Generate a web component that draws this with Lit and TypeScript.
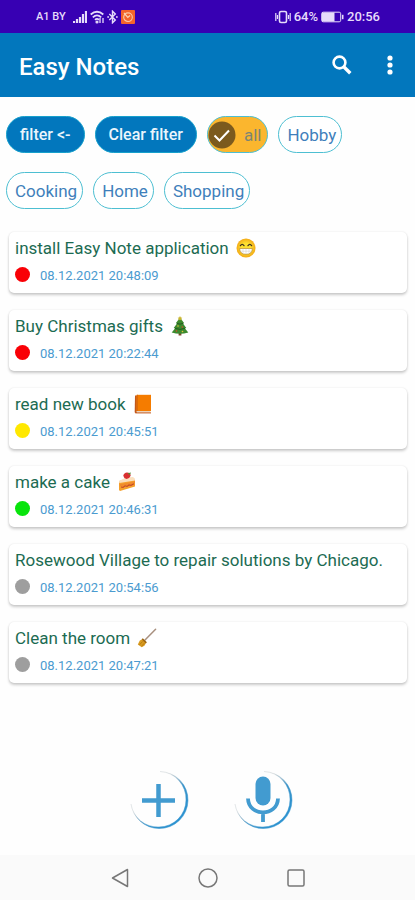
import { LitElement, html, css, svg, nothing, type TemplateResult } from "lit";
import { customElement, property } from "lit/decorators.js";
import { classMap } from "lit/directives/class-map.js";

type Priority = "high" | "medium" | "low" | "none";

interface Note {
  title: string;
  emoji?: string;
  priority: Priority;
  date: string;
}

const NOTES: Note[] = [
  { title: "install Easy Note application", emoji: "grin", priority: "high", date: "08.12.2021 20:48:09" },
  { title: "Buy Christmas gifts", emoji: "tree", priority: "high", date: "08.12.2021 20:22:44" },
  { title: "read new book", emoji: "book", priority: "medium", date: "08.12.2021 20:45:51" },
  { title: "make a cake", emoji: "cake", priority: "low", date: "08.12.2021 20:46:31" },
  { title: "Rosewood Village to repair solutions by Chicago.", priority: "none", date: "08.12.2021 20:54:56" },
  { title: "Clean the room", emoji: "broom", priority: "none", date: "08.12.2021 20:47:21" },
];

const EMOJI: Record<string, TemplateResult> = {
  grin: svg`
    <defs><radialGradient id="face"><stop offset="0.5" stop-color="#fde030"/><stop offset="1" stop-color="#f3a916"/></radialGradient></defs>
    <circle cx="10" cy="10" r="9.5" fill="url(#face)"/>
    <path d="M4.4 7.6Q6.2 5 8 7.6M12 7.6Q13.800 5 15.600 7.6" fill="none" stroke="#3f3420" stroke-width="1.300" stroke-linecap="round"/>
    <path d="M3.600 10.500H16.400Q16.200 16.300 10 16.300T3.600 10.500Z" fill="#fff" stroke="#b98a2a" stroke-width=".7"/>
    <path d="M4.300 13.200H15.700M7 10.700V15.600M10 10.700V16M13 10.700V15.600" stroke="#cfc9c0" stroke-width=".5"/>`,
  tree: svg`
    <path d="M8.600 16H11.400V19.500H8.600Z" fill="#7b4a2b"/>
    <path d="M10 1.500L14 7L12.800 7.200L16.300 12L14.800 12.300L18.300 16.600Q10 19 1.700 16.600L5.200 12.300L3.700 12L7.200 7.200L6 7Z" fill="#3c8a2e"/>
    <path d="M6.500 7.300Q10 9 13.500 7.300M4.800 12.300Q10 14.500 15.200 12.300" fill="none" stroke="#245c1e" stroke-width="1"/>
    <path d="M10 0L10.800 1.600L12.300 1.800L11.200 3L11.500 4.500L10 3.700L8.500 4.500L8.800 3L7.700 1.800L9.200 1.600Z" fill="#c9b52d"/>
    <circle cx="8" cy="10" r=".8" fill="#e3c23a"/><circle cx="12.300" cy="11" r=".8" fill="#d9472b"/><circle cx="6.500" cy="15" r=".8" fill="#d9472b"/><circle cx="12.500" cy="15.500" r=".8" fill="#e3c23a"/>`,
  book: svg`
    <path d="M2 1.500H4V19H2.500Q1.700 19 1.700 18Z" fill="#c2571a"/>
    <path d="M3.500 .8H18V17H3.500Z" fill="#f57c00"/>
    <path d="M3.500 17H17.500V18.600H3.500Z" fill="#e9d3bd"/>
    <path d="M2.300 18.400H18V19.400H2.300Z" fill="#c2571a"/>
    <path d="M4.500 .8V17" stroke="#dc6a08" stroke-width="1"/>`,
  cake: svg`
    <path d="M2 9L14 6.500Q17.500 6.500 18 8L18 14.500L3 19L2 18Z" fill="#f5a02c"/>
    <path d="M2 9L9 5.500L16 5L18 6.800V8.400L2.300 11Z" fill="#fbe0c0"/>
    <path d="M2.600 12.300L18 9.200V11.200L2.800 14.600Z" fill="#f08a2b"/>
    <path d="M4 15L6 15.400L8 13.800L10 14.400L12 12.900L14 13.300L17 11.700" fill="none" stroke="#c6482a" stroke-width="1.200"/>
    <path d="M6.300 3.800Q7 .8 10 .6Q13.500 .8 13.600 3.600Q12.500 6.800 9.500 6.900Q6.700 6.400 6.300 3.800Z" fill="#d93030"/>
    <path d="M10.500 1.200L14 .6L13 3Z" fill="#568f36"/>`,
  broom: svg`
    <path d="M8 12L18.600 1.300" stroke="#a8907f" stroke-width="1.500" stroke-linecap="round"/>
    <path d="M5.800 11L9.200 14.400L7.600 17.400L4.800 19.200L.8 16.600L2.800 12.600Z" fill="#d99a1e"/>
    <path d="M5.800 10.200L9.900 14.200L8.800 15.400L4.700 11.300Z" fill="#9a6412"/>
    <path d="M2.500 16.800L5.500 13.500M4.700 18.200L7.300 15.200" stroke="#a87412" stroke-width=".7"/>`,
};

const EMOJI_LABEL: Record<string, string> = {
  grin: "beaming face",
  tree: "Christmas tree",
  book: "orange book",
  cake: "shortcake",
  broom: "broom",
};

@customElement("status-bar")
class StatusBar extends LitElement {
  static styles = css`
    :host {
      display: flex;
      justify-content: space-between;
      align-items: center;
      height: 33px;
      padding: 0 35px 0 36px;
      background: #3700b3;
      color: #e6dcfa;
      font: 500 13px/16px Roboto, sans-serif;
    }
    .side { display: flex; align-items: center; gap: 3px; }
    .carrier { margin-right: 4px; font-size: 11px; }
    svg { display: block; fill: none; stroke: currentColor; }
  `;

  render() {
    return html`
      <div class="side">
        <span class="carrier">A1 BY</span>
        <svg width="14" height="14" viewBox="0 0 14 14" stroke-width="2.200">
          <path d="M1 13V11M4 13V9M7 13V7M10 13V4M13 13V1" />
        </svg>
        <svg width="14" height="14" viewBox="0 0 14 14" stroke-width="1.800">
          <path d="M.7 4.500Q7-1 13.300 4.500M2.800 7.300Q7 3.500 11.200 7.300M5 9.800Q7 8 9 9.800" />
          <path d="M10 8V13M13 8V13" stroke-width="1.300" /><circle cx="7" cy="12" r=".7" />
        </svg>
        <svg width="11" height="14" viewBox="0 0 11 14" stroke-width="1.400">
          <path d="M2.300 4L8.300 10L5.500 12.800V1.200L8.300 4L2.300 10" />
          <path d="M.3 7H2M9 7H10.700" stroke-width="1.600" />
        </svg>
        <svg width="14" height="14" viewBox="0 0 14 14">
          <rect width="14" height="14" rx="1" fill="#f4642a" stroke="none" />
          <circle cx="7" cy="7.200" r="4.300" stroke="#fbc9a8" stroke-width="1.100" />
          <path d="M3 3L6.800 7.500L9 5.500" stroke="#fbd3b4" stroke-width="1.200" />
        </svg>
      </div>
      <div class="side">
        <svg width="16" height="14" viewBox="0 0 16 14" stroke-width="1.600">
          <rect x="4.500" y="1.500" width="7" height="11" rx="1.500" />
          <path d="M.8 3V11M2.500 5V9M13.500 5V9M15.200 3V11" stroke-width="1.200" />
        </svg>
        <span>64%</span>
        <svg width="23" height="12" viewBox="0 0 23 12">
          <rect x=".7" y="1.200" width="19" height="9.600" rx="1.500" />
          <rect x="1" y="1.500" width="12.500" height="9" fill="currentColor" stroke="none" />
          <path d="M21.700 3.800V8.200" stroke-width="1.600" />
        </svg>
        <span>20:56</span>
      </div>
    `;
  }
}

@customElement("app-header")
class AppHeader extends LitElement {
  static styles = css`
    :host {
      display: flex;
      align-items: center;
      height: 64px;
      padding: 0 5px 0 19px;
      background: #0277bd;
      color: #fff;
    }
    h1 { flex: 1; margin: 0; padding-top: 4px; font: 500 24px/32px Roboto, sans-serif; }
    button {
      display: grid;
      place-items: center;
      height: 48px;
      width: 40px;
      padding: 0;
      border: 0;
      background: none;
      color: inherit;
    }
    .search { width: 56px; }
    svg { display: block; }
  `;

  render() {
    return html`
      <h1>Easy Notes</h1>
      <button class="search" aria-label="Search">
        <svg width="20" height="20" viewBox="0 0 20 20" fill="none" stroke="#fff">
          <circle cx="7.500" cy="7.500" r="5.900" stroke-width="2.600" />
          <path d="M12 12L18.300 18.300" stroke-width="3.400" />
        </svg>
      </button>
      <button aria-label="More options">
        <svg width="6" height="20" viewBox="0 0 6 20" fill="#fff">
          <circle cx="3" cy="3" r="2.600" /><circle cx="3" cy="10" r="2.600" /><circle cx="3" cy="17" r="2.600" />
        </svg>
      </button>
    `;
  }
}

@customElement("filter-chips")
class FilterChips extends LitElement {
  static styles = css`
    :host {
      display: flex;
      flex-wrap: wrap;
      gap: 19px 10px;
      padding: 19px 6px 0;
    }
    button {
      display: flex;
      align-items: center;
      height: 37px;
      padding: 0 5px 0 8px;
      border: 1px solid #4dbfd2;
      border-radius: 19px;
      background: #fff;
      color: #3f7fbb;
      font: 400 17px/20px Roboto, sans-serif;
    }
    .action {
      padding: 0 13px;
      border-color: #16a0cc;
      background: #0277bd;
      color: #eaf5fc;
      font-size: 16px;
      font-weight: 500;
    }
    .checked {
      gap: 8px;
      padding: 0 6px 0 0;
      background: #fbb62e;
      color: #7c8573;
    }
    .check { display: block; }
  `;

  private chip(label: string, kind = "") {
    return html`<button class=${classMap({ action: kind === "action", checked: kind === "checked" })}>
      ${kind === "checked"
        ? html`<svg class="check" width="28" height="28" viewBox="0 0 28 28" aria-hidden="true">
            <circle cx="14" cy="14" r="13.500" fill="#7b5a1e" />
            <path d="M6.500 14.500L11.500 19.500L21 9.500" fill="none" stroke="#fff" stroke-width="2" />
          </svg>`
        : nothing}<span>${label}</span>
    </button>`;
  }

  render() {
    return html`
      ${this.chip("filter <-", "action")} ${this.chip("Clear filter", "action")}
      ${this.chip("all", "checked")} ${["Hobby", "Cooking", "Home", "Shopping"].map((c) => this.chip(c))}
    `;
  }
}

@customElement("note-card")
class NoteCard extends LitElement {
  static styles = css`
    :host {
      display: block;
      box-sizing: border-box;
      height: 61px;
      padding: 4px 6px;
      border-radius: 5px;
      background: #fff;
      box-shadow: 0 2px 3px rgba(0, 0, 0, 0.2), 0 0 2px rgba(0, 0, 0, 0.1);
      font-family: Roboto, sans-serif;
    }
    h2 {
      display: flex;
      align-items: center;
      gap: 7px;
      margin: 0;
      color: #1c6b52;
      font-size: 17px;
      font-weight: 400;
      line-height: 24px;
      white-space: nowrap;
    }
    p {
      display: flex;
      align-items: flex-start;
      gap: 10px;
      margin: 7px 0 0;
      color: #4b9bd0;
      font-size: 13px;
      line-height: 18px;
    }
    .dot { width: 15px; height: 15px; border-radius: 50%; }
    .high { background: #f90006; }
    .medium { background: #ffe800; }
    .low { background: #08e40c; }
    .none { background: #9e9e9e; }
  `;

  @property({ attribute: false }) note!: Note;

  render() {
    const { title, emoji, priority, date } = this.note;
    return html`
      <h2>
        <span>${title}</span>
        ${emoji
          ? html`<svg width="20" height="20" viewBox="0 0 20 20" role="img" aria-label=${EMOJI_LABEL[emoji]}>${EMOJI[emoji]}</svg>`
          : nothing}
      </h2>
      <p><span class="dot ${priority}"></span><time>${date}</time></p>
    `;
  }
}

@customElement("app-root")
class AppRoot extends LitElement {
  static styles = css`
    :host {
      display: flex;
      flex-direction: column;
      min-height: 100vh;
      background: #fefefe;
    }
    .notes {
      display: flex;
      flex-direction: column;
      gap: 17px;
      margin: 0;
      padding: 23px 8px 24px 9px;
      list-style: none;
    }
    .fabs {
      display: flex;
      justify-content: center;
      gap: 44px;
      margin-top: auto;
      padding: 0 0 25px 6px;
    }
    button { display: grid; place-items: center; padding: 0; border: 0; background: none; }
    .nav {
      display: flex;
      justify-content: center;
      height: 45px;
      background: #fafafa;
    }
    .nav button { width: 88px; }
    svg { display: block; fill: none; }
  `;

  private fab(label: string, icon: TemplateResult) {
    return html`<button aria-label=${label}>
      <svg width="60" height="60" viewBox="0 0 60 60">
        <defs>
          <linearGradient id="ring" x1="0.15" y1="0.15" x2="0.85" y2="0.85">
            <stop offset="0.3" stop-color="#9aa7ae" stop-opacity="0.3" />
            <stop offset="0.6" stop-color="#3a93c8" />
            <stop offset="1" stop-color="#2b92d0" />
          </linearGradient>
        </defs>
        <path d="M31 1.500A28.500 28.500 0 0 1 30 58.500A28.500 28.500 0 0 1 2 34A27 27 0 0 0 30 57A27 27 0 0 0 57 30A27.500 27.500 0 0 0 31 1.500Z" fill="url(#ring)" stroke="url(#ring)" stroke-width=".5" />
        ${icon}
      </svg>
    </button>`;
  }

  render() {
    return html`
      <status-bar></status-bar>
      <app-header></app-header>
      <filter-chips></filter-chips>
      <ul class="notes">
        ${NOTES.map((n) => html`<li><note-card .note=${n}></note-card></li>`)}
      </ul>
      <div class="fabs">
        ${this.fab("Add note", svg`<path d="M13 30.500H46M29.500 14V47" stroke="#429bd0" stroke-width="4.500" />`)}
        ${this.fab(
          "Record voice note",
          svg`<rect x="22.500" y="6.500" width="15" height="29" rx="7.500" fill="#429bd0" />
            <path d="M15 28.500C15.500 47 44.500 47 45 28.500M30 42V52" stroke="#429bd0" stroke-width="3.800" />`,
        )}
      </div>
      <nav class="nav">
        <button aria-label="Back">
          <svg width="18" height="20" viewBox="0 0 18 20"><path d="M1.500 10L16.500 1.500V18.500Z" stroke="#777" stroke-width="1.500" stroke-linejoin="round" /></svg>
        </button>
        <button aria-label="Home">
          <svg width="20" height="20" viewBox="0 0 20 20"><circle cx="10" cy="10" r="9" stroke="#777" stroke-width="1.500" /></svg>
        </button>
        <button aria-label="Recent apps">
          <svg width="18" height="18" viewBox="0 0 18 18"><rect x="1" y="1" width="16" height="16" rx="1.500" stroke="#777" stroke-width="1.500" /></svg>
        </button>
      </nav>
    `;
  }
}
